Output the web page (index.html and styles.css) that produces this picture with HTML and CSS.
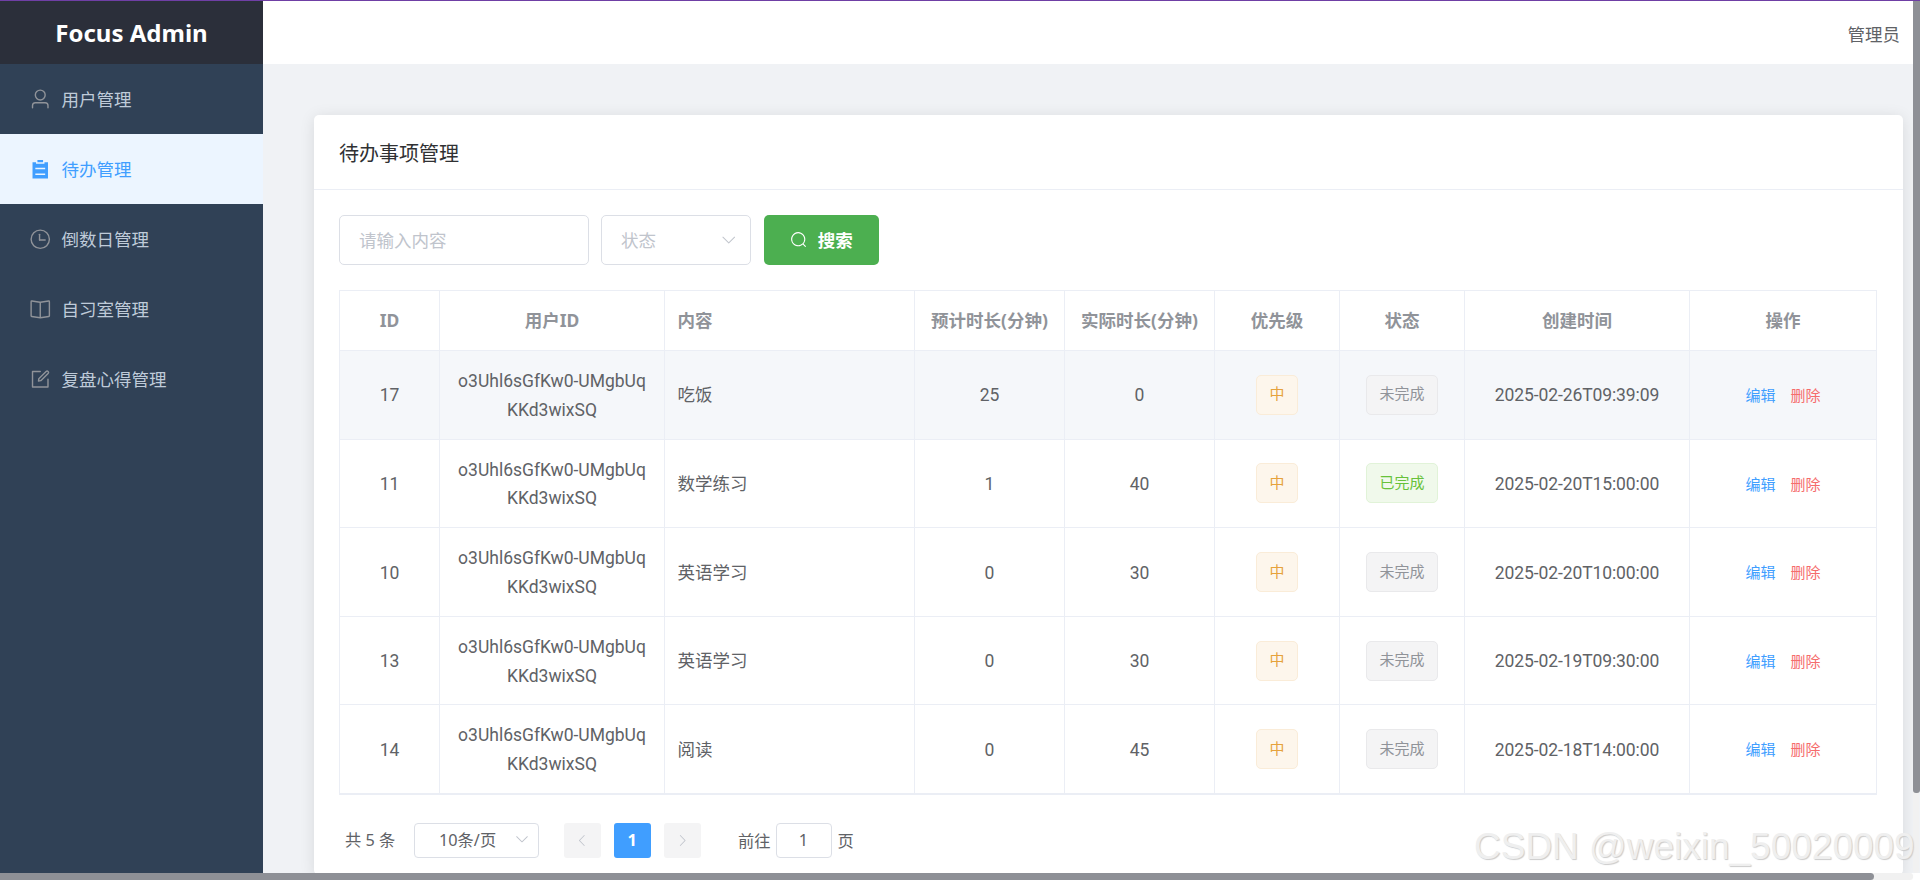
FILE: index.html
```html
<!DOCTYPE html>
<html lang="zh-CN">
<head>
<meta charset="utf-8">
<title>Focus Admin</title>
<link rel="stylesheet" href="styles.css">
</head>
<body>
<div class="topline"></div>
<div class="app">
  <aside class="sidebar">
    <div class="logo">Focus Admin</div>
    <nav class="menu">
      <a class="menu-item"><svg class="menu-icon" viewBox="0 0 1024 1024"><path d="M512 512a192 192 0 1 0 0-384 192 192 0 0 0 0 384m0 64a256 256 0 1 1 0-512 256 256 0 0 1 0 512m320 320v-96a96 96 0 0 0-96-96H288a96 96 0 0 0-96 96v96a32 32 0 1 1-64 0v-96a160 160 0 0 1 160-160h448a160 160 0 0 1 160 160v96a32 32 0 1 1-64 0"/></svg><span>用户管理</span></a>
      <a class="menu-item active"><svg class="menu-icon" viewBox="0 0 1024 1024"><path d="M704 192h160v736H160V192h160v64h384zM288 512h448v-64H288zm0 256h448v-64H288zm96-576V96h256v96z"/></svg><span>待办管理</span></a>
      <a class="menu-item"><svg class="menu-icon" viewBox="0 0 1024 1024"><path d="M512 896a384 384 0 1 0 0-768 384 384 0 0 0 0 768m0 64a448 448 0 1 1 0-896 448 448 0 0 1 0 896"/><path d="M480 256a32 32 0 0 1 32 32v256a32 32 0 0 1-64 0V288a32 32 0 0 1 32-32"/><path d="M480 512h256q32 0 32 32t-32 32H480q-32 0-32-32t32-32"/></svg><span>倒数日管理</span></a>
      <a class="menu-item"><svg class="menu-icon" viewBox="0 0 1024 1024"><path d="m512 863.36 384-54.848v-638.72L525.568 222.72a96 96 0 0 1-27.136 0L128 169.792v638.72zM137.024 106.432l370.432 52.928a32 32 0 0 0 9.088 0l370.432-52.928A64 64 0 0 1 960 169.792v638.72a64 64 0 0 1-54.976 63.36l-388.48 55.488a32 32 0 0 1-9.088 0l-388.48-55.488A64 64 0 0 1 64 808.512v-638.72a64 64 0 0 1 73.024-63.36z"/><path d="M480 192h64v704h-64z"/></svg><span>自习室管理</span></a>
      <a class="menu-item"><svg class="menu-icon" viewBox="0 0 1024 1024"><path d="M832 512a32 32 0 1 1 64 0v352a32 32 0 0 1-32 32H160a32 32 0 0 1-32-32V160a32 32 0 0 1 32-32h352a32 32 0 0 1 0 64H192v640h640z"/><path d="m469.952 554.24 52.8-7.552L847.104 222.4a32 32 0 1 0-45.248-45.248L477.44 501.44l-7.552 52.8zm422.4-422.4a96 96 0 0 1 0 135.808l-331.84 331.84a32 32 0 0 1-18.112 9.088L436.8 623.68a32 32 0 0 1-36.224-36.224l15.104-105.6a32 32 0 0 1 9.024-18.112l331.904-331.84a96 96 0 0 1 135.744 0z"/></svg><span>复盘心得管理</span></a>
    </nav>
  </aside>
  <div class="main">
    <header class="topbar"><span class="user">管理员</span></header>
    <section class="content">
      <div class="card">
        <div class="card-header">待办事项管理</div>
        <div class="card-body">
          <div class="toolbar">
            <div class="field field-input"><span class="placeholder">请输入内容</span></div>
            <div class="field field-select"><span class="placeholder">状态</span><svg class="chevron" viewBox="0 0 1024 1024"><path d="M831.872 340.864 512 652.672 192.128 340.864a30.592 30.592 0 0 0-42.752 0 29.12 29.12 0 0 0 0 41.6L489.664 714.24a32 32 0 0 0 44.672 0l340.288-331.712a29.12 29.12 0 0 0 0-41.728 30.592 30.592 0 0 0-42.752 0z"/></svg></div>
            <button class="search-btn"><svg class="search-icon" viewBox="0 0 1024 1024"><path d="m795.904 750.72 124.992 124.928a32 32 0 0 1-45.248 45.248L750.656 795.904a416 416 0 1 1 45.248-45.248zM480 832a352 352 0 1 0 0-704 352 352 0 0 0 0 704"/></svg><span>搜索</span></button>
          </div>
          <table class="grid">
            <colgroup><col class="c-id"><col class="c-user"><col class="c-text"><col class="c-dur"><col class="c-dur"><col class="c-tag"><col class="c-tag"><col class="c-user"><col class="c-ops"></colgroup>
            <thead><tr><th>ID</th><th>用户ID</th><th class="left">内容</th><th>预计时长(分钟)</th><th>实际时长(分钟)</th><th>优先级</th><th>状态</th><th>创建时间</th><th>操作</th></tr></thead>
            <tbody>
              <tr class="hover"><td>17</td><td class="uid">o3Uhl6sGfKw0-UMgbUq<br>KKd3wixSQ</td><td class="left">吃饭</td><td>25</td><td>0</td><td><span class="tag warn">中</span></td><td><span class="tag todo">未完成</span></td><td class="date">2025-02-26T09:39:09</td><td><a class="link edit">编辑</a><a class="link del">删除</a></td></tr>
              <tr><td>11</td><td class="uid">o3Uhl6sGfKw0-UMgbUq<br>KKd3wixSQ</td><td class="left">数学练习</td><td>1</td><td>40</td><td><span class="tag warn">中</span></td><td><span class="tag done">已完成</span></td><td class="date">2025-02-20T15:00:00</td><td><a class="link edit">编辑</a><a class="link del">删除</a></td></tr>
              <tr><td>10</td><td class="uid">o3Uhl6sGfKw0-UMgbUq<br>KKd3wixSQ</td><td class="left">英语学习</td><td>0</td><td>30</td><td><span class="tag warn">中</span></td><td><span class="tag todo">未完成</span></td><td class="date">2025-02-20T10:00:00</td><td><a class="link edit">编辑</a><a class="link del">删除</a></td></tr>
              <tr><td>13</td><td class="uid">o3Uhl6sGfKw0-UMgbUq<br>KKd3wixSQ</td><td class="left">英语学习</td><td>0</td><td>30</td><td><span class="tag warn">中</span></td><td><span class="tag todo">未完成</span></td><td class="date">2025-02-19T09:30:00</td><td><a class="link edit">编辑</a><a class="link del">删除</a></td></tr>
              <tr><td>14</td><td class="uid">o3Uhl6sGfKw0-UMgbUq<br>KKd3wixSQ</td><td class="left">阅读</td><td>0</td><td>45</td><td><span class="tag warn">中</span></td><td><span class="tag todo">未完成</span></td><td class="date">2025-02-18T14:00:00</td><td><a class="link edit">编辑</a><a class="link del">删除</a></td></tr>
            </tbody>
          </table>
          <div class="pager">
            <span class="total">共 5 条</span>
            <div class="size-select"><span>10条/页</span><svg class="chevron small" viewBox="0 0 1024 1024"><path d="M831.872 340.864 512 652.672 192.128 340.864a30.592 30.592 0 0 0-42.752 0 29.12 29.12 0 0 0 0 41.6L489.664 714.24a32 32 0 0 0 44.672 0l340.288-331.712a29.12 29.12 0 0 0 0-41.728 30.592 30.592 0 0 0-42.752 0z"/></svg></div>
            <div class="pages">
              <span class="page-btn"><svg class="arrow" viewBox="0 0 1024 1024"><path d="M609.408 149.376 277.76 489.6a32 32 0 0 0 0 44.672l331.648 340.352a29.12 29.12 0 0 0 41.728 0 30.592 30.592 0 0 0 0-42.752L339.264 511.936l311.872-319.872a30.592 30.592 0 0 0 0-42.688 29.12 29.12 0 0 0-41.728 0z"/></svg></span>
              <span class="page-btn current">1</span>
              <span class="page-btn"><svg class="arrow" viewBox="0 0 1024 1024"><path d="M340.864 149.312a30.592 30.592 0 0 0 0 42.752L652.736 512 340.864 831.872a30.592 30.592 0 0 0 0 42.752 29.12 29.12 0 0 0 41.728 0L714.24 534.336a32 32 0 0 0 0-44.672L382.592 149.376a29.12 29.12 0 0 0-41.728 0z"/></svg></span>
            </div>
            <div class="jump"><span>前往</span><span class="jump-input">1</span><span>页</span></div>
          </div>
        </div>
      </div>
    </section>
  </div>
</div>
<div class="vbar"><div class="vthumb"></div></div>
<div class="hbar"><div class="hthumb"></div></div>
<div class="watermark">CSDN @weixin_50020009</div>
</body>
</html>
```
FILE: styles.css
```css
* { box-sizing: border-box; }
html, body { margin: 0; height: 880px; overflow: hidden; background: #fff; }
body {
  position: relative;
  font-family: "Noto Sans", "Noto Sans CJK SC", sans-serif;
  font-size: 17.5px;
  color: #606266;
}
.topline { height: 1px; background: #6f3fa5; }
.app { display: flex; width: 1953px; height: 872px; }

.sidebar { width: 263px; flex: none; background: #304156; display: flex; flex-direction: column; }
.logo {
  height: 63px; flex: none; background: #2b2f3a; color: #fff;
  font-size: 24px; font-weight: 700; display: flex; align-items: center; justify-content: center;
}
.menu { display: flex; flex-direction: column; }
.menu-item {
  height: 70px; display: flex; align-items: center; padding-left: 29px;
  color: #bfcbd9; font-size: 17.5px;
}
.menu-item span { padding-bottom: 2px; }
.menu-icon { width: 22.5px; height: 22.5px; margin-right: 10px; fill: #909399; flex: none; }
.menu-item.active { background: #ecf5ff; color: #409eff; }
.menu-item.active .menu-icon { fill: #409eff; }

.main { flex: 1; min-width: 0; background: #f0f2f5; }
.topbar {
  height: 63px; background: #fff; display: flex; align-items: center; justify-content: flex-end;
  padding-right: 53px; color: #606266;
}
.user { padding-top: 2px; }
.content { padding: 51px 50px 0 51px; }
.card {
  background: #fff; border-radius: 5px; height: 760px;
  box-shadow: 0 2.5px 15px rgba(0, 0, 0, .1);
}
.card-header {
  height: 75px; padding: 0 25px; display: flex; align-items: center;
  font-size: 20px; color: #303133; border-bottom: 1px solid #ebeef5;
}
.card-body { padding: 25px; }

.toolbar { display: flex; gap: 12px; height: 50px; margin-bottom: 25px; }
.field {
  height: 50px; border: 1px solid #dcdfe6; border-radius: 5px; background: #fff;
  display: flex; align-items: center; padding-left: 19px;
}
.field-input { width: 250px; }
.field-select { width: 150px; margin-right: 1px; justify-content: space-between; padding-right: 13px; }
.placeholder { color: #c0c4cc; padding-bottom: 2px; }
.chevron { width: 17.5px; height: 17.5px; fill: #c0c4cc; }
.chevron.small { width: 16px; height: 16px; }
.search-btn {
  width: 115px; height: 50px; border: 0; border-radius: 5px; background: #4caf50; color: #fff;
  font: 700 17.5px "Noto Sans", "Noto Sans CJK SC", sans-serif;
  display: flex; align-items: center; justify-content: center; padding: 0;
}
.search-btn span { padding-bottom: 2px; }
.search-icon { width: 17.5px; height: 17.5px; fill: #fff; margin-right: 10px; }

.grid {
  width: 1537px; table-layout: fixed; border-collapse: separate; border-spacing: 0;
  border-top: 1px solid #ebeef5; border-left: 1px solid #ebeef5; border-bottom: 1px solid #ebeef5;
}
.c-id { width: 100px; }
.c-user { width: 225px; }
.c-text { width: 250px; }
.c-dur { width: 150px; }
.c-tag { width: 125px; }
.c-ops { width: 187px; }
.grid th, .grid td {
  border-right: 1px solid #ebeef5; border-bottom: 1px solid #ebeef5;
  text-align: center; padding: 0 12.5px; font-size: 17.5px; line-height: 28.75px;
}
.grid th { height: 60px; color: #909399; font-weight: 700; }
.grid td { height: 88.6px; padding-top: 2px; font-family: Roboto, "Noto Sans CJK SC", sans-serif; }
.grid td.uid { white-space: nowrap; }
.grid td.date { letter-spacing: -.1px; }
.grid .left { text-align: left; }
.grid tr.hover td { background: #f5f7fa; }

.tag {
  display: inline-flex; align-items: center; justify-content: center; height: 40px; padding: 0 12.5px;
  margin-bottom: 2px;
  font-size: 15px; border: 1px solid; border-radius: 5px; vertical-align: middle;
}
.tag.warn { background: #fdf6ec; border-color: #faecd8; color: #e6a23c; }
.tag.todo { background: #f4f4f5; border-color: #e9e9eb; color: #909399; }
.tag.done { background: #f0f9eb; border-color: #e1f3d8; color: #67c23a; }
.link { font-size: 15px; }
.link.edit { color: #409eff; margin-right: 15px; }
.link.del { color: #f56c6c; }

.pager { display: flex; align-items: center; height: 35px; margin-top: 28px; padding-left: 6px; font-size: 16.25px; }
.total { width: 69px; flex: none; padding-bottom: 2px; }
.size-select {
  width: 125px; height: 35px; border: 1px solid #dcdfe6; border-radius: 4px; flex: none;
  display: flex; align-items: center; justify-content: space-between; padding: 0 8px 2px 24px;
}
.pages { display: flex; gap: 12.5px; margin-left: 24.5px; }
.page-btn {
  width: 37.5px; height: 35px; background: #f4f4f5; border-radius: 3px;
  display: flex; align-items: center; justify-content: center;
}
.page-btn.current { background: #409eff; color: #fff; font-weight: 700; }
.arrow { width: 15px; height: 15px; fill: #c0c4cc; }
.jump { display: flex; align-items: center; margin-left: 37px; }
.jump-input {
  width: 56px; height: 35px; margin: 0 6px 0 5px; border: 1px solid #dcdfe6; border-radius: 4px;
  display: flex; align-items: center; justify-content: center;
}

.vbar { position: absolute; left: 1913px; top: 1px; width: 6px; height: 872px; background: #f1f1f1; border-radius: 0 0 3px 3px; }
.vthumb { width: 7px; height: 792px; background: #8e9096; border-radius: 0 0 3px 3px; }
.hbar { position: absolute; left: 0; top: 873px; width: 1913px; height: 7px; background: #f1f1f1; border-radius: 0 3px 3px 0; }
.hthumb { width: 1874px; height: 7px; background: #8e9096; border-radius: 0 4px 4px 0; }
.watermark {
  position: absolute; left: 1474px; top: 825px;
  font: 37px/44px "Liberation Sans", Arial, sans-serif; color: #efefef; white-space: nowrap;
  text-shadow: 1px 1px 1px #cbcbcb;
}
```
